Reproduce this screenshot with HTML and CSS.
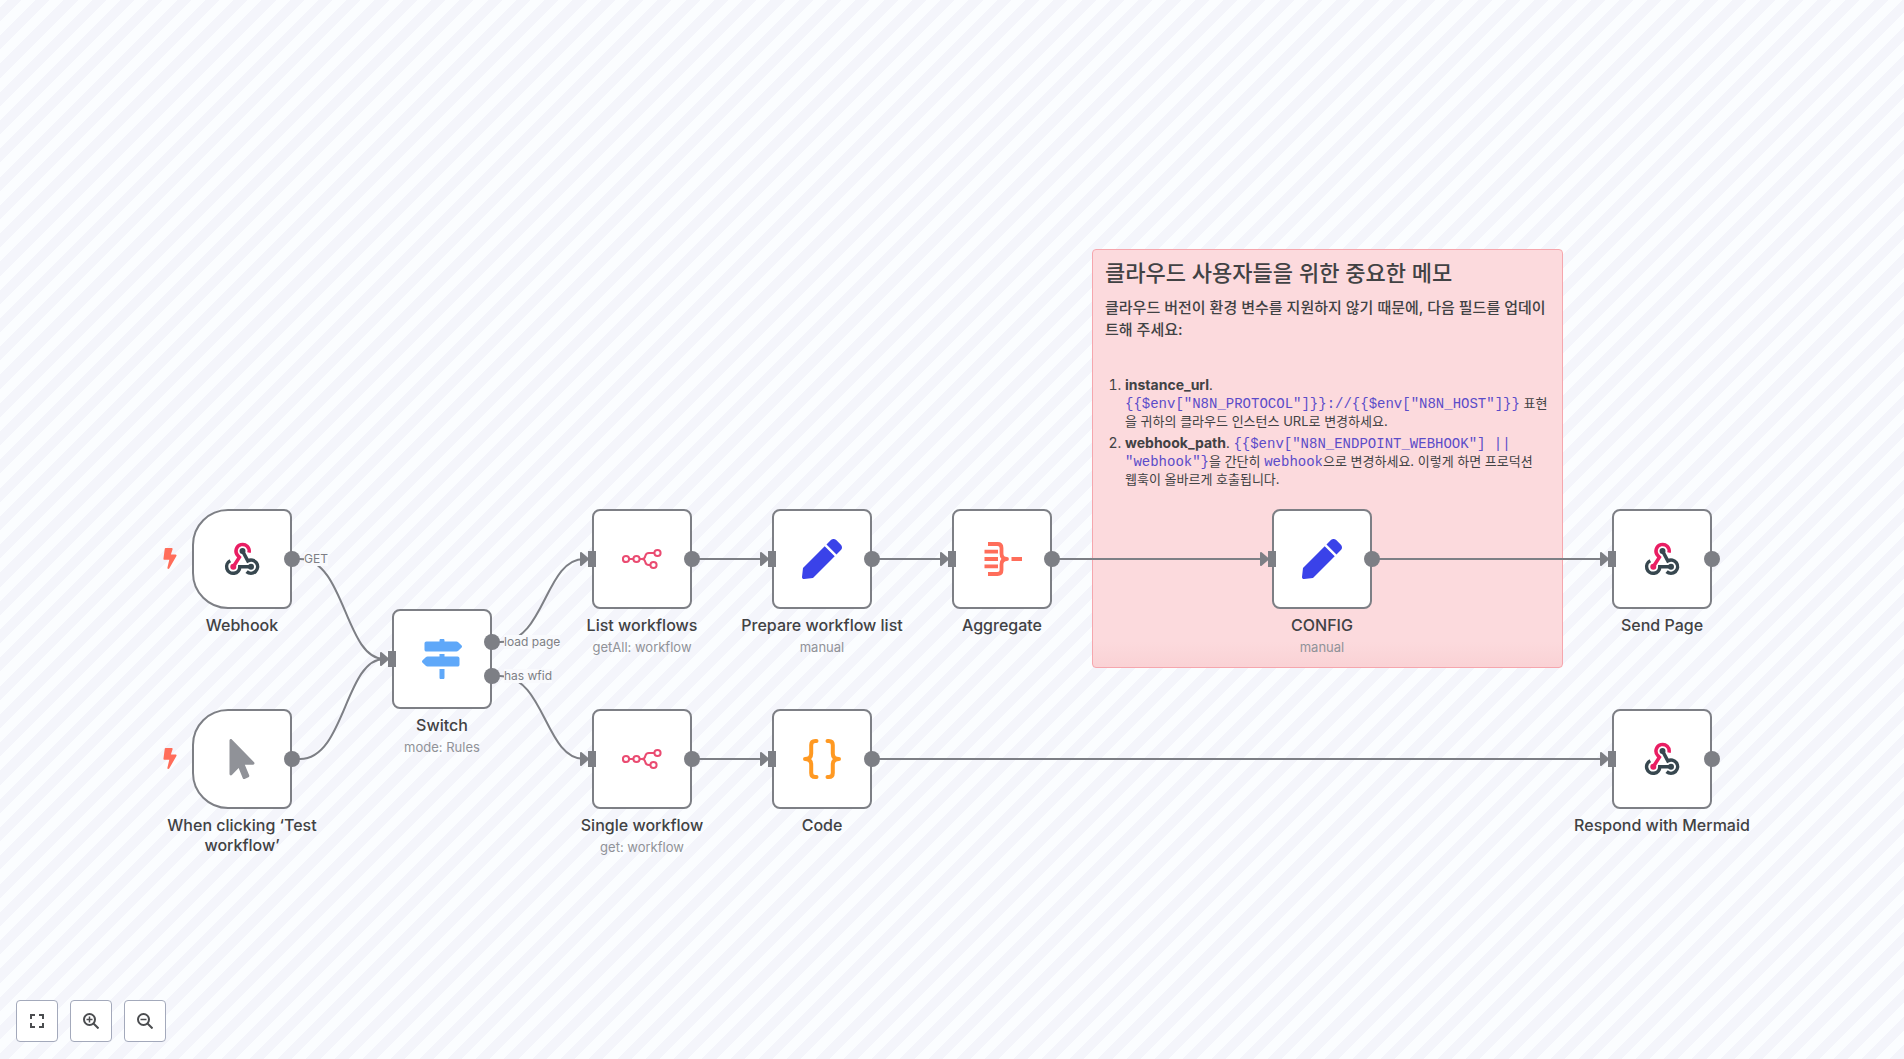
FILE: index.html
```html
<!DOCTYPE html>
<html lang="ko">
<head>
<meta charset="utf-8">
<title>Workflow</title>
<link rel="stylesheet" href="styles.css">
</head>
<body>
<svg class="defs" aria-hidden="true">
  <defs>
    <symbol id="i-webhook" viewBox="0 0 40 40">
      <g fill="none" stroke-width="3.500">
        <path stroke="#37474f" d="M8.300 21.800A6.600 6.600 0 1 0 17.800 27.700H29"/>
        <path stroke="#37474f" d="M20.500 12L25.800 21.900A6.600 6.600 0 1 1 24.600 32.600"/>
        <path stroke="#e91e63" d="M27 13.600A6.600 6.600 0 1 0 15.800 16.600L17.400 18.200L11.300 27.700"/>
      </g>
      <circle cx="20.500" cy="12" r="3" fill="#37474f"/>
      <circle cx="11.300" cy="27.700" r="3" fill="#e91e63"/>
      <circle cx="29" cy="27.700" r="3" fill="#37474f"/>
    </symbol>
    <symbol id="i-cursor" viewBox="0 0 320 512"><path fill="#909298" d="M302.189 329.126H196.105l55.831 135.993c3.889 9.428-.555 19.999-9.444 23.999l-49.165 21.427c-9.165 4-19.443-.571-23.332-9.714l-53.053-129.136-86.664 89.138C18.729 472.710 0 463.554 0 447.977V18.299C0 1.899 19.921-6.096 30.277 5.443l284.412 292.542c11.472 11.179 3.007 31.141-12.500 31.141z"/></symbol>
    <symbol id="i-bolt" viewBox="0 0 320 512"><path fill="#ff6d5a" d="M296 160H180.600l42.600-129.800C227.200 15 215.700 0 200 0H56C44 0 33.800 8.900 32.200 20.800l-32 240C-1.700 275.200 9.500 288 24 288h118.700L96.600 482.500c-3.600 15.200 8 29.500 23.300 29.500 8.400 0 16.400-4.400 20.800-12l176-304c9.300-15.900-2.200-36-20.700-36z"/></symbol>
    <symbol id="i-signs" viewBox="0 0 512 512"><path fill="#5fa8f9" d="M507.310 84.690L464 41.370c-6-6-14.140-9.370-22.630-9.370H288V16c0-8.840-7.160-16-16-16h-32c-8.840 0-16 7.160-16 16v16H56c-13.250 0-24 10.750-24 24v80c0 13.250 10.750 24 24 24h385.370c8.490 0 16.620-3.370 22.630-9.370l43.310-43.310c6.250-6.260 6.250-16.380 0-22.630zM224 496c0 8.840 7.160 16 16 16h32c8.840 0 16-7.160 16-16V384h-64v112zm232-272H288v-32h-64v32H70.630c-8.490 0-16.620 3.370-22.630 9.370L4.690 276.690c-6.250 6.250-6.250 16.380 0 22.630L48 342.630c6 6 14.140 9.370 22.630 9.370H456c13.250 0 24-10.750 24-24v-80c0-13.250-10.750-24-24-24z"/></symbol>
    <symbol id="i-n8n" viewBox="0 0 40 40">
      <g fill="none" stroke="#ea4b71" stroke-width="2">
        <circle cx="4" cy="20" r="3.100"/><circle cx="14.500" cy="20" r="3.100"/>
        <circle cx="35.500" cy="14" r="3.100"/><circle cx="31.500" cy="26" r="3.100"/>
        <path d="M7.100 20h4.300M17.600 20h2.400c2.600 0 3-1.500 3.300-3 .4-2 1.600-3 3.600-3h5.500M20 20c2.600 0 3 1.500 3.300 3 .4 2 1.600 3 3.600 3h1.500"/>
      </g>
    </symbol>
    <symbol id="i-pen" viewBox="0 0 512 512"><path fill="#3a42e9" d="M290.740 93.240l128.020 128.020-277.990 277.990-114.140 12.600C11.350 513.540-1.560 500.620.14 485.340l12.700-114.220 277.900-277.880zm207.200-19.060l-60.110-60.110c-18.750-18.750-49.160-18.750-67.910 0l-56.550 56.550 128.020 128.020 56.550-56.550c18.750-18.760 18.750-49.160 0-67.910z"/></symbol>
    <symbol id="i-agg" viewBox="0 0 40 40">
      <g fill="none" stroke="#ff6d5a" stroke-width="3.800">
        <path stroke-linejoin="round" d="M6 5h9.500q4 0 4 4v5.500q0 5.500 5.500 5.500q-5.500 0-5.500 5.500V31q0 4-4 4H6"/>
        <path d="M2.500 12.600h13.500M2.500 20h13.500M2.500 27.400h13.500M29.500 20H40"/>
      </g>
    </symbol>
    <symbol id="i-code" viewBox="0 0 40 40">
      <path fill="none" stroke="#ff9922" stroke-width="4" stroke-linecap="round" stroke-linejoin="round" d="M14.500 2H13.200Q9.200 2 9.200 6V14.500Q9.200 20 3 20Q9.200 20 9.200 25.500V34Q9.200 38 13.200 38H14.500M25.500 2H26.800Q30.800 2 30.800 6V14.500Q30.800 20 37 20Q30.800 20 30.800 25.500V34Q30.800 38 26.800 38H25.500"/>
    </symbol>
  </defs>
</svg>

<main class="canvas">
  <section class="sticky">
    <h1>클라우드 사용자들을 위한 중요한 메모</h1>
    <h2>클라우드 버전이 환경 변수를 지원하지 않기 때문에, 다음 필드를 업데이트해 주세요:</h2>
    <ol>
      <li><strong>instance_url</strong>. <code>{{$env["N8N_PROTOCOL"]}}://{{$env["N8N_HOST"]}}</code> 표현을 귀하의 클라우드 인스턴스 URL로 변경하세요.</li>
      <li><strong>webhook_path</strong>. <code>{{$env["N8N_ENDPOINT_WEBHOOK"] || "webhook"}</code>을 간단히 <code>webhook</code>으로 변경하세요. 이렇게 하면 프로덕션<br>웹훅이 올바르게 호출됩니다.</li>
    </ol>
  </section>

  <svg class="edges" aria-hidden="true">
    <path d="M292 559H300C345 559 345 659 384 659"/>
    <path d="M292 759H300C345 759 345 659 384 659"/>
    <path d="M492 642H500C545 642 545 559 584 559"/>
    <path d="M492 676H500C545 676 545 759 584 759"/>
    <path d="M692 559H764M872 559H944M1052 559H1264M1372 559H1604M692 759H764M872 759H1604"/>
    <path class="tip" d="M381 653l7 6-7 6zM581 553l7 6-7 6zM581 753l7 6-7 6zM761 553l7 6-7 6zM761 753l7 6-7 6zM941 553l7 6-7 6zM1261 553l7 6-7 6zM1601 553l7 6-7 6zM1601 753l7 6-7 6z"/>
  </svg>

  <article class="node trigger n-webhook">
    <div class="box"><svg><use href="#i-webhook"/></svg></div>
    <svg class="bolt"><use href="#i-bolt"/></svg>
    <i class="out"></i><span class="port">GET</span>
    <p class="name">Webhook</p>
  </article>
  <article class="node trigger n-manual">
    <div class="box"><svg><use href="#i-cursor"/></svg></div>
    <svg class="bolt"><use href="#i-bolt"/></svg>
    <i class="out"></i>
    <p class="name">When clicking ‘Test workflow’</p>
  </article>
  <article class="node n-switch">
    <div class="box"><svg><use href="#i-signs"/></svg></div>
    <i class="in"></i><i class="out first"></i><i class="out second"></i>
    <span class="port first">load page</span><span class="port second">has wfid</span>
    <p class="name">Switch</p><p class="sub">mode: Rules</p>
  </article>
  <article class="node n-list">
    <div class="box"><svg><use href="#i-n8n"/></svg></div><i class="in"></i><i class="out"></i>
    <p class="name">List workflows</p><p class="sub">getAll: workflow</p>
  </article>
  <article class="node n-single">
    <div class="box"><svg><use href="#i-n8n"/></svg></div><i class="in"></i><i class="out"></i>
    <p class="name">Single workflow</p><p class="sub">get: workflow</p>
  </article>
  <article class="node n-prepare">
    <div class="box"><svg><use href="#i-pen"/></svg></div><i class="in"></i><i class="out"></i>
    <p class="name">Prepare workflow list</p><p class="sub">manual</p>
  </article>
  <article class="node n-code">
    <div class="box"><svg><use href="#i-code"/></svg></div><i class="in"></i><i class="out"></i>
    <p class="name">Code</p>
  </article>
  <article class="node n-aggregate">
    <div class="box"><svg><use href="#i-agg"/></svg></div><i class="in"></i><i class="out"></i>
    <p class="name">Aggregate</p>
  </article>
  <article class="node n-config">
    <div class="box"><svg><use href="#i-pen"/></svg></div><i class="in"></i><i class="out"></i>
    <p class="name">CONFIG</p><p class="sub">manual</p>
  </article>
  <article class="node n-send">
    <div class="box"><svg><use href="#i-webhook"/></svg></div><i class="in"></i><i class="out"></i>
    <p class="name">Send Page</p>
  </article>
  <article class="node n-respond">
    <div class="box"><svg><use href="#i-webhook"/></svg></div><i class="in"></i><i class="out"></i>
    <p class="name">Respond with Mermaid</p>
  </article>

  <nav class="controls">
    <button type="button" aria-label="Zoom to fit"><svg viewBox="0 0 16 16"><path d="M2 6V2h4M10 2h4v4M14 10v4h-4M6 14H2v-4"/></svg></button>
    <button type="button" aria-label="Zoom in"><svg viewBox="0 0 16 16"><circle cx="6.500" cy="6.500" r="5.500"/><path d="M10.500 10.500l5 5"/><path class="thin" d="M3.500 6.500h6M6.500 3.500v6"/></svg></button>
    <button type="button" aria-label="Zoom out"><svg viewBox="0 0 16 16"><circle cx="6.500" cy="6.500" r="5.500"/><path d="M10.500 10.500l5 5"/><path class="thin" d="M3.500 6.500h6"/></svg></button>
  </nav>
</main>
</body>
</html>
```
FILE: styles.css
```css
* { box-sizing: border-box; }
body { margin: 0; font-family: Inter, "Noto Sans CJK KR", sans-serif; color: #414244; }
h1, h2, p { margin: 0; }
.defs { position: absolute; width: 0; height: 0; }

.canvas {
  position: relative;
  min-height: 100vh;
  overflow: hidden;
  display: flex;
  align-items: flex-end;
  background: repeating-linear-gradient(-45deg, #f4f5fb 0 10px, #fbfdff 10px 20px);
}

/* connections */
.edges { position: absolute; inset: 0; width: 100%; height: 100%; fill: none; stroke: #7d7f85; stroke-width: 2; }
.edges .tip { fill: #7d7f85; stroke-linejoin: round; }

/* sticky note */
.sticky {
  position: absolute;
  left: 1092px;
  top: 249px;
  width: 471px;
  height: 419px;
  padding: 10px 12px;
  border: 1px solid #f6a6ad;
  border-radius: 4px;
  background: linear-gradient(#fcdadd 94%, #fad2d5);
}
.sticky h1 { font-size: 22px; line-height: 26px; font-weight: 500; margin-bottom: 11px; }
.sticky h2 { font-size: 15px; line-height: 22px; font-weight: 500; margin-bottom: 35px; }
.sticky ol { margin: 0; padding-left: 20px; font-size: 13px; line-height: 18px; }
.sticky li { margin-bottom: 4px; }
.sticky li::marker { font-size: 14px; }
.sticky strong { font-size: 14px; font-weight: 700; }
.sticky code { font-family: "Courier New", "Liberation Mono", monospace; font-size: 14px; line-height: 14px; color: #5b4cc9; }

/* nodes */
.node { position: absolute; width: 100px; height: 100px; }
.box {
  display: flex;
  align-items: center;
  justify-content: center;
  height: 100px;
  border: 2px solid #7d7f85;
  border-radius: 8px;
  background: #fff;
}
.trigger .box { border-radius: 36px 8px 8px 36px; }
.box svg { width: 40px; height: 40px; }
.bolt { position: absolute; left: -29px; top: 39px; width: 14px; height: 21px; }
.in { position: absolute; left: -4px; top: 42px; width: 8px; height: 16px; background: #7d7f85; }
.out { position: absolute; left: 92px; top: 42px; width: 16px; height: 16px; border-radius: 50%; background: #7d7f85; }
.out.first { top: 25px; }
.out.second { top: 59px; }
.port {
  position: absolute;
  left: 112px;
  top: 43px;
  font-size: 12px;
  line-height: 14px;
  color: #7d7f85;
  white-space: nowrap;
  background: #f9fafd;
}
.port.first { top: 26px; }
.port.second { top: 60px; }
.name { width: 180px; margin: 6px -40px 0; font-size: 16px; line-height: 20px; font-weight: 500; text-align: center; }
.sub { width: 180px; margin: 4px -40px 0; font-size: 13px; line-height: 16px; color: #909298; text-align: center; }

.n-webhook { left: 192px; top: 509px; }
.n-manual { left: 192px; top: 709px; }
.n-switch { left: 392px; top: 609px; }
.n-list { left: 592px; top: 509px; }
.n-single { left: 592px; top: 709px; }
.n-prepare { left: 772px; top: 509px; }
.n-code { left: 772px; top: 709px; }
.n-aggregate { left: 952px; top: 509px; }
.n-config { left: 1272px; top: 509px; }
.n-send { left: 1612px; top: 509px; }
.n-respond { left: 1612px; top: 709px; }

/* view controls */
.controls { display: flex; gap: 12px; padding: 16px 16px 17px; }
.controls button {
  display: flex;
  align-items: center;
  justify-content: center;
  width: 42px;
  height: 42px;
  padding: 0;
  border: 1px solid #a3a9bb;
  border-radius: 4px;
  background: #fff;
}
.controls svg { width: 16px; height: 16px; fill: none; stroke: #4b4d50; stroke-width: 2; }
.controls .thin { stroke-width: 1.5; }
```
